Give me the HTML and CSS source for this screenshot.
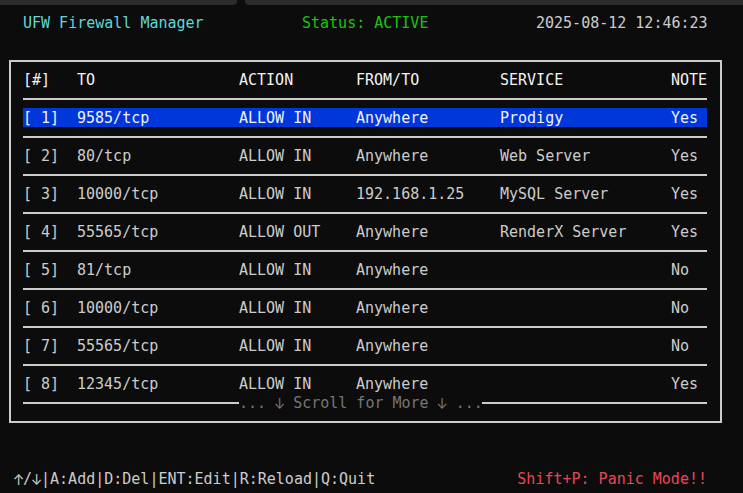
FILE: index.html
```html
<!DOCTYPE html>
<html lang="en">
<head>
<meta charset="utf-8">
<title>UFW Firewall Manager</title>
<link rel="stylesheet" href="styles.css">
</head>
<body>
<div class="tabstrip"><div class="tab tab-left"></div><div class="tab tab-right"></div></div>
<main class="screen">
  <header class="topbar">
    <span class="title">UFW Firewall Manager</span>
    <span class="status">Status: ACTIVE</span>
    <span class="clock">2025-08-12 12:46:23</span>
  </header>
  <section class="box">
    <div class="row head"><span>[#]</span><span>TO</span><span>ACTION</span><span>FROM/TO</span><span>SERVICE</span><span>NOTE</span></div>
    <div class="sep"></div>
    <div class="row sel"><span>[ 1]</span><span>9585/tcp</span><span>ALLOW IN</span><span>Anywhere</span><span>Prodigy</span><span>Yes</span></div>
    <div class="sep"></div>
    <div class="row"><span>[ 2]</span><span>80/tcp</span><span>ALLOW IN</span><span>Anywhere</span><span>Web Server</span><span>Yes</span></div>
    <div class="sep"></div>
    <div class="row"><span>[ 3]</span><span>10000/tcp</span><span>ALLOW IN</span><span>192.168.1.25</span><span>MySQL Server</span><span>Yes</span></div>
    <div class="sep"></div>
    <div class="row"><span>[ 4]</span><span>55565/tcp</span><span>ALLOW OUT</span><span>Anywhere</span><span>RenderX Server</span><span>Yes</span></div>
    <div class="sep"></div>
    <div class="row"><span>[ 5]</span><span>81/tcp</span><span>ALLOW IN</span><span>Anywhere</span><span></span><span>No</span></div>
    <div class="sep"></div>
    <div class="row"><span>[ 6]</span><span>10000/tcp</span><span>ALLOW IN</span><span>Anywhere</span><span></span><span>No</span></div>
    <div class="sep"></div>
    <div class="row"><span>[ 7]</span><span>55565/tcp</span><span>ALLOW IN</span><span>Anywhere</span><span></span><span>No</span></div>
    <div class="sep"></div>
    <div class="row"><span>[ 8]</span><span>12345/tcp</span><span>ALLOW IN</span><span>Anywhere</span><span></span><span>Yes</span></div>
    <div class="more"><span class="more-line first"></span><span class="more-text">... <span class="arrow">↓</span> Scroll for More <span class="arrow">↓</span> ...</span><span class="more-line"></span></div>
  </section>
  <footer class="footer">
    <span class="keys"><span class="arrow">↑</span>/<span class="arrow">↓</span>|A:Add|D:Del|ENT:Edit|R:Reload|Q:Quit</span>
    <span class="panic">Shift+P: Panic Mode!!</span>
  </footer>
</main>
</body>
</html>
```

FILE: styles.css
```css
html, body {
  margin: 0;
  padding: 0;
  background: #0c0c0c;
  width: 743px;
  height: 493px;
  overflow: hidden;
}

body {
  font-family: "DejaVu Sans Mono", "Liberation Mono", monospace;
  font-size: 15px;
  line-height: 19px;
  color: #cccccc;
}

span {
  white-space: pre;
}

.arrow {
  display: inline-flex;
  justify-content: center;
  width: 9px;
  font-family: "Inter", "DejaVu Sans", sans-serif;
  font-size: 14px;
  line-height: 19px;
  vertical-align: top;
}

.tabstrip {
  display: flex;
  height: 5px;
  gap: 8px;
}

.tab {
  background: #2b2b2b;
}

.tab-left {
  width: 237px;
  border-bottom-right-radius: 4px;
}

.tab-right {
  flex: 1;
  border-bottom-left-radius: 4px;
}

.screen {
  padding-top: 8px;
}

.topbar {
  display: grid;
  grid-template-columns: 279px 234px 171px;
  padding-left: 23px;
  height: 19px;
}

.topbar > span,
.row > span,
.footer > span,
.more-text {
  padding-top: 1px;
}

.title { color: #61d6d6; }
.status { color: #16c60c; }
.clock { color: #cccccc; }

.box {
  margin-top: 28px;
  margin-left: 9px;
  width: 684px;
  border: 2px solid #cccccc;
  padding: 8px 13px 9px 12px;
}

.row {
  display: grid;
  grid-template-columns: 54px 162px 117px 144px 171px 36px;
  grid-template-rows: 19px;
  height: 19px;
}

.row.head {
  color: #f2f2f2;
}

.row.sel {
  background: #0037da;
  color: #f2f2f2;
}

.sep {
  height: 19px;
  display: flex;
  align-items: center;
}

.sep::before {
  content: "";
  flex: 1;
  height: 2px;
  background: #cccccc;
}

.more {
  display: flex;
  align-items: center;
  height: 19px;
}

.more-line {
  flex: 1;
  height: 2px;
  background: #cccccc;
}

.more-line.first {
  flex: 0 0 216px;
}

.more-text {
  color: #767676;
  width: 243px;
}

.footer {
  display: flex;
  justify-content: space-between;
  margin-top: 46px;
  padding-left: 14px;
  width: 693px;
  height: 19px;
}

.panic {
  color: #e74856;
}
```
